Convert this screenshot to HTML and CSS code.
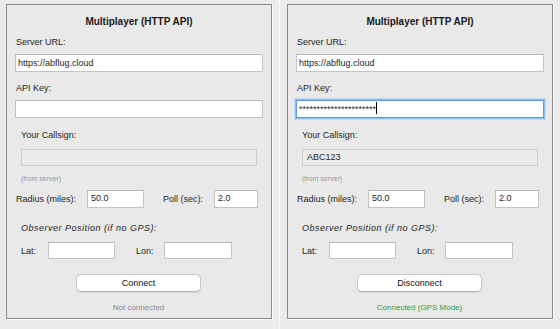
FILE: index.html
```html
<!DOCTYPE html>
<html>
<head>
<meta charset="utf-8">
<link rel="stylesheet" href="styles.css">
</head>
<body>
<div class="screen">
  <div class="half half-left">
    <div class="panel">
      <div class="title">Multiplayer (HTTP API)</div>
      <div class="label lbl-server">Server URL:</div>
      <div class="field wide">https://abflug.cloud</div>
      <div class="label lbl-key">API Key:</div>
      <div class="field wide"></div>
      <div class="label sub lbl-call">Your Callsign:</div>
      <div class="field disabled"></div>
      <div class="hint">(from server)</div>
      <div class="row row-radius">
        <span class="label">Radius (miles):</span>
        <div class="field num">50.0</div>
        <span class="label">Poll (sec):</span>
        <div class="field num">2.0</div>
      </div>
      <div class="observer">Observer Position (if no GPS):</div>
      <div class="row row-pos">
        <span class="label">Lat:</span>
        <div class="field pos"></div>
        <span class="label">Lon:</span>
        <div class="field pos"></div>
      </div>
      <div class="btn-wrap"><div class="btn">Connect</div></div>
      <div class="status">Not connected</div>
    </div>
  </div>
  <div class="divider"></div>
  <div class="half half-right">
    <div class="panel">
      <div class="title">Multiplayer (HTTP API)</div>
      <div class="label lbl-server">Server URL:</div>
      <div class="field wide">https://abflug.cloud</div>
      <div class="label lbl-key">API Key:</div>
      <div class="field wide focused">**********************<span class="caret"></span></div>
      <div class="label sub lbl-call">Your Callsign:</div>
      <div class="field disabled">ABC123</div>
      <div class="hint">(from server)</div>
      <div class="row row-radius">
        <span class="label">Radius (miles):</span>
        <div class="field num">50.0</div>
        <span class="label">Poll (sec):</span>
        <div class="field num">2.0</div>
      </div>
      <div class="observer">Observer Position (if no GPS):</div>
      <div class="row row-pos">
        <span class="label">Lat:</span>
        <div class="field pos"></div>
        <span class="label">Lon:</span>
        <div class="field pos"></div>
      </div>
      <div class="btn-wrap"><div class="btn">Disconnect</div></div>
      <div class="status ok">Connected (GPS Mode)</div>
    </div>
  </div>
</div>
</body>
</html>
```

FILE: styles.css
```css
* { box-sizing: border-box; }
html, body { margin: 0; padding: 0; }
body {
  width: 560px;
  height: 329px;
  background: #ececec;
  font-family: "Liberation Sans", Arial, sans-serif;
  font-size: 9px;
  color: #1e1e1e;
  overflow: hidden;
}
.screen { display: flex; height: 329px; }
.half { width: 279px; height: 329px; background: #ececec; }
.half-right { width: 280px; }
.divider { width: 1px; background: #fafafa; }
.half-left .panel { margin: 4px 0 0 6px; }
.half-right .panel { margin: 4px 0 0 7px; }
.panel {
  width: 266px;
  height: 315px;
  border: 1px solid #8c8c8c;
  box-shadow: 1px 1px 0 #fbfbfb;
  background: #e9e9e9;
  padding: 10px 8px 0 8px;
  display: flex;
  flex-direction: column;
}
.title {
  font-weight: bold;
  font-size: 10px;
  line-height: 14px;
  text-align: center;
  color: #1a1a1a;
}
.label { line-height: 12px; white-space: nowrap; }
.lbl-server { margin: 7px 0 0 1px; }
.lbl-key { margin: 10px 0 0 1px; }
.lbl-call { margin: 11px 0 0 6px; }
.field {
  height: 18px;
  background: #fff;
  border: 1px solid #c4c4c4;
  border-top-color: #b8b8b8;
  padding: 0 3px;
  line-height: 16px;
  white-space: nowrap;
  overflow: hidden;
}
.wide { margin-top: 6px; width: 248px; padding-left: 2px; }
.focused {
  position: relative;
  border-color: #5d9be0;
  box-shadow: 0 0 0 1px #8fbdf0, 0 0 0 2px #c2dcf7;
  letter-spacing: 0;
}
.caret {
  display: inline-block;
  width: 1px;
  height: 12px;
  background: #000;
  vertical-align: -2px;
}
.disabled {
  margin: 8px 6px 0 6px;
  height: 17px;
  background: #ebebeb;
  border-color: #cdcdcd;
  padding-left: 4px;
  line-height: 15px;
}
.hint {
  margin: 8px 0 0 6px;
  font-size: 7px;
  line-height: 10px;
  color: #9a9a9a;
}
.row { display: grid; align-items: center; }
.row-radius {
  margin-top: 6px;
  padding-left: 1px;
  grid-template-columns: 71px 57px 19px 51px 44px;
}
.row-radius .num:nth-of-type(2) { grid-column: 5; }
.row-radius span:nth-of-type(2) { grid-column: 4; }
.num { height: 18px; line-height: 15px; }
.observer {
  margin: 14px 0 0 6px;
  font-style: italic;
  letter-spacing: 0.5px;
  line-height: 12px;
}
.row-pos {
  margin-top: 8px;
  padding-left: 6px;
  grid-template-columns: 27px 67px 21px 28px 68px;
}
.row-pos span:nth-of-type(2) { grid-column: 4; }
.row-pos .pos:nth-of-type(2) { grid-column: 5; }
.pos { height: 17px; }
.btn-wrap { display: flex; justify-content: center; margin-top: 15px; padding-right: 1px; }
.btn {
  width: 125px;
  height: 18px;
  background: #fff;
  border: 1px solid #c6c6c6;
  border-bottom-color: #b4b4b4;
  border-radius: 5px;
  box-shadow: 0 1px 0 #d6d6d6;
  text-align: center;
  line-height: 16px;
  color: #111;
}
.status {
  margin-top: 11px;
  text-align: center;
  font-size: 8px;
  line-height: 10px;
  color: #8a8a8a;
  padding-right: 1px;
}
.status.ok { color: #3a993a; }
```
